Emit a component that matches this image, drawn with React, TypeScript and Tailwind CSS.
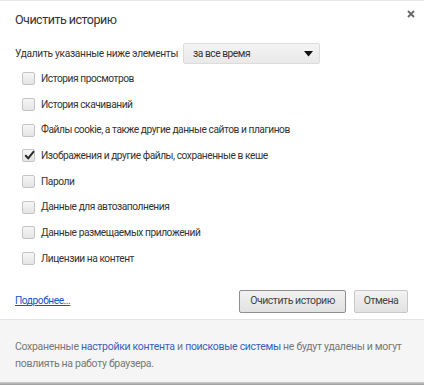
import React from "react";

const items: { label: string; checked: boolean }[] = [
  { label: "История просмотров", checked: false },
  { label: "История скачиваний", checked: false },
  { label: "Файлы cookie, а также другие данные сайтов и плагинов", checked: false },
  { label: "Изображения и другие файлы, сохраненные в кеше", checked: true },
  { label: "Пароли", checked: false },
  { label: "Данные для автозаполнения", checked: false },
  { label: "Данные размещаемых приложений", checked: false },
  { label: "Лицензии на контент", checked: false },
];

function Checkbox({ checked }: { checked: boolean }) {
  return (
    <span className="relative flex h-[13px] w-[13px] shrink-0 items-center justify-center rounded-[2px] border border-[#c4c4c4] bg-gradient-to-b from-[#f6f6f6] to-[#e4e4e4]">
      {checked && (
        <svg width="11" height="11" viewBox="0 0 11 11" className="absolute left-[1px] top-[0px]">
          <path d="M1.8 5.8 L4.2 8.4 L9.4 1.8" fill="none" stroke="#2a2a2a" strokeWidth="2" strokeLinecap="round" strokeLinejoin="round" />
        </svg>
      )}
    </span>
  );
}

export default function App() {
  return (
    <div
      className="flex h-[385px] w-[424px] flex-col bg-white text-[10.2px] tracking-[-0.45px] text-[#333]"
      style={{ fontFamily: 'Roboto, "Open Sans", sans-serif' }}
    >
      <div className="flex flex-1 flex-col border-t border-[#e6e6e6]">
        <div className="relative px-[15px] pt-[9px]">
          <h1 className="text-[12.5px] leading-[20px] tracking-[-0.5px] text-[#333]">Очистить историю</h1>
          <svg width="8" height="8" viewBox="0 0 8 8" className="absolute right-[9px] top-[9px]">
            <path d="M1 1 L7 7 M7 1 L1 7" stroke="#666" strokeWidth="1.8" />
          </svg>
        </div>
        <div className="mt-[13px] flex items-center px-[15px]">
          <span className="tracking-[-0.3px]">Удалить указанные ниже элементы</span>
          <div className="ml-[5px] flex h-[21px] w-[137px] items-center justify-between rounded-[2px] border border-[#dcdcdc] bg-gradient-to-b from-[#f4f4f4] to-[#e9e9e9] pl-[9px] pr-[6px]">
            <span>за все время</span>
            <svg width="9" height="6" viewBox="0 0 9 6">
              <path d="M0 0 L9 0 L4.5 5.5 Z" fill="#111" />
            </svg>
          </div>
        </div>
        <div className="mt-[2px] flex flex-col px-[22px]">
          {items.map((it) => (
            <div key={it.label} className="flex h-[25.7px] items-center gap-[6px]">
              <Checkbox checked={it.checked} />
              <span className="leading-[14px]">{it.label}</span>
            </div>
          ))}
        </div>
        <div className="mt-[18px] flex items-center justify-between pl-[15px] pr-[16px]">
          <a className="text-[#1155cc] underline">Подробнее...</a>
          <div className="flex gap-[8px]">
            <button className="h-[23px] w-[107px] rounded-[2px] border border-[#8f8f8f] bg-gradient-to-b from-[#f2f2f2] to-[#e2e2e2] text-[10.5px] text-[#444]">
              Очистить историю
            </button>
            <button className="h-[23px] w-[54px] rounded-[2px] border border-[#c8c8c8] bg-gradient-to-b from-[#f2f2f2] to-[#e2e2e2] text-[10.5px] text-[#444]">
              Отмена
            </button>
          </div>
        </div>
      </div>
      <div className="h-[63px] border-t border-[#e3e3e3] bg-[#f5f5f5] px-[15px] pt-[18px] text-[10.5px] leading-[17px] tracking-[-0.3px] text-[#777]">
        <p>
          Сохраненные <span className="text-[#3a5fb8]">настройки контента</span> и{" "}
          <span className="text-[#3a5fb8]">поисковые системы</span> не будут удалены и могут
        </p>
        <p>повлиять на работу браузера.</p>
      </div>
      <div className="h-[3px] bg-gradient-to-b from-[#d0d0d0] to-[#9a9a9a]" />
    </div>
  );
}
